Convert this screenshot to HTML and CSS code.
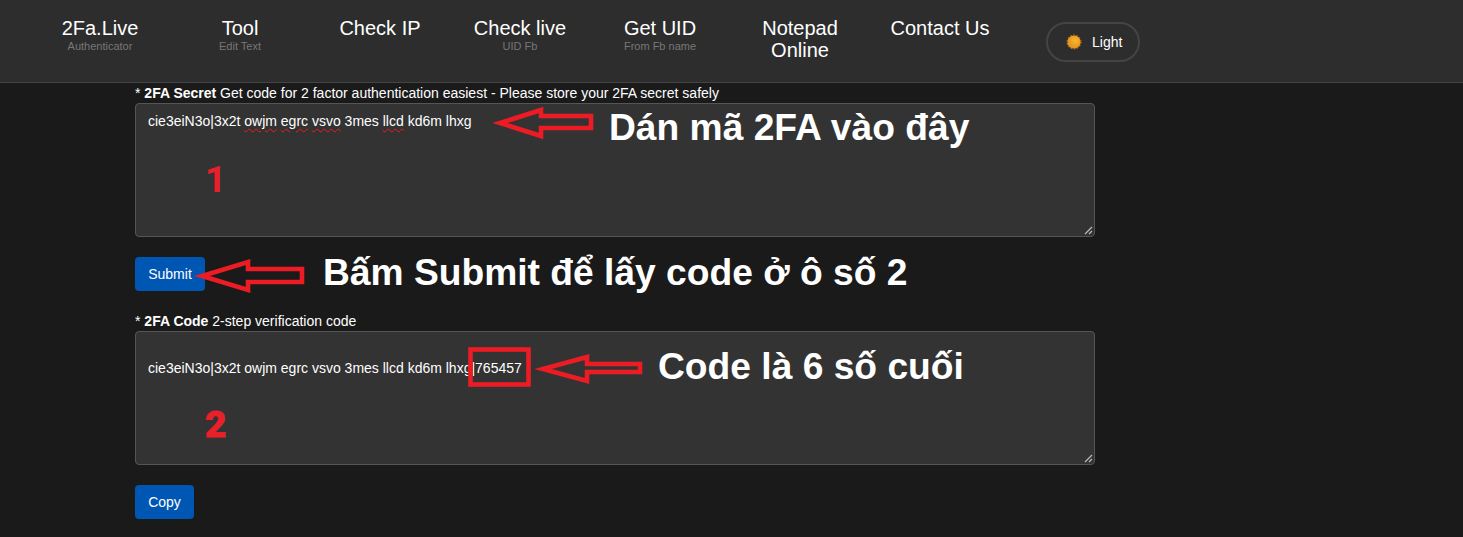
FILE: index.html
```html
<!DOCTYPE html>
<html lang="vi">
<head>
<meta charset="utf-8">
<title>2Fa.Live</title>
<link rel="stylesheet" href="styles.css">
</head>
<body>
<header class="topbar">
  <nav class="nav">
    <a class="nav-item"><span class="nav-title">2Fa.Live</span><span class="nav-sub">Authenticator</span></a>
    <a class="nav-item"><span class="nav-title">Tool</span><span class="nav-sub">Edit Text</span></a>
    <a class="nav-item"><span class="nav-title">Check IP</span></a>
    <a class="nav-item"><span class="nav-title">Check live</span><span class="nav-sub">UID Fb</span></a>
    <a class="nav-item"><span class="nav-title">Get UID</span><span class="nav-sub">From Fb name</span></a>
    <a class="nav-item"><span class="nav-title">Notepad Online</span></a>
    <a class="nav-item"><span class="nav-title">Contact Us</span></a>
  </nav>
  <div class="theme-toggle">
    <svg class="sun" width="16" height="16" viewBox="0 0 16 16">
      <defs><radialGradient id="sunfill" cx="0.6" cy="0.4" r="0.7"><stop offset="0" stop-color="#fbb62f"/><stop offset="1" stop-color="#e08a1a"/></radialGradient></defs>
      <circle cx="8" cy="8" r="6.6" fill="url(#sunfill)"/>
      <circle cx="8" cy="8" r="7" fill="none" stroke="#e08a1a" stroke-width="0.9" stroke-dasharray="1.6 1.6"/>
    </svg>
    <span>Light</span>
  </div>
</header>
<main class="content">
  <p class="field-label">* <b>2FA Secret</b> Get code for 2 factor authentication easiest - Please store your 2FA secret safely</p>
  <div class="textbox">cie3eiN3o|3x2t <span class="typo">owjm</span> <span class="typo">egrc</span> <span class="typo">vsvo</span> 3mes <span class="typo">llcd</span> kd6m lhxg<svg class="grip" width="9" height="9" viewBox="0 0 9 9"><path d="M1 8 8 1M5 8 8 5" stroke="#bbb" stroke-width="1.2"/></svg></div>
  <button class="btn btn-submit">Submit</button>
  <p class="field-label">* <b>2FA Code</b> 2-step verification code</p>
  <div class="textbox textbox-result">cie3eiN3o|3x2t owjm egrc vsvo 3mes llcd kd6m lhxg|765457<svg class="grip" width="9" height="9" viewBox="0 0 9 9"><path d="M1 8 8 1M5 8 8 5" stroke="#bbb" stroke-width="1.2"/></svg></div>
  <button class="btn btn-copy">Copy</button>
</main>
<svg class="marks" width="1463" height="537" viewBox="0 0 1463 537">
  <g fill="none" stroke="#ed1c24" stroke-width="4.6" stroke-linejoin="miter">
    <path d="M500 123 541 110V116H591V128H541V136Z"/>
    <path d="M202 276 248 262V269H302V282H248V290Z"/>
    <path d="M543 369 587 357V364H640V372H587V381Z"/>
    <rect x="470.5" y="349.5" width="58" height="35"/>
  </g>
</svg>
<span class="note note-1">Dán mã 2FA vào đây</span>
<span class="note note-2">Bấm Submit để lấy code ở ô số 2</span>
<span class="note note-3">Code là 6 số cuối</span>
<span class="num num-1">1</span>
<span class="num num-2">2</span>
</body>
</html>
```
FILE: styles.css
```css
* { box-sizing: border-box; }
html, body { height: 100%; }
body {
  margin: 0;
  background: #1a1a1a;
  color: #fff;
  font-family: "Liberation Sans", Arial, sans-serif;
  overflow: hidden;
  position: relative;
}
.topbar {
  height: 83px;
  background: #2d2d2d;
  border-bottom: 1px solid #444;
  display: flex;
  padding: 17px 0 0 30px;
}
.nav { display: flex; }
.nav-item {
  width: 140px;
  padding: 0 20px;
  display: flex;
  flex-direction: column;
  align-items: center;
  text-align: center;
}
.nav-title { font-size: 20px; line-height: 22px; color: #fff; }
.nav-sub { font-size: 11px; line-height: 13px; margin-top: 1px; color: #777; }
.theme-toggle {
  width: 94px;
  height: 40px;
  margin: 5px 0 0 36px;
  border: 2px solid #444;
  border-radius: 20px;
  display: flex;
  align-items: center;
  gap: 10px;
  padding-left: 18px;
  font-size: 14px;
}
.sun { flex: none; }
.content {
  width: 960px;
  margin-left: 135px;
}
.field-label {
  margin: 0;
  font-size: 14px;
  line-height: 20px;
}
.textbox {
  position: relative;
  height: 134px;
  background: #333;
  border: 1px solid #555;
  border-radius: 4px;
  padding: 7px 12px;
  font-size: 14px;
  line-height: 20px;
}
.textbox-result { padding-top: 26px; }
.typo {
  text-decoration: underline wavy #f01c1c 1.1px;
  text-underline-offset: 2px;
}
.grip { position: absolute; right: 1px; bottom: 1px; }
.btn {
  display: block;
  height: 34px;
  border: 0;
  border-radius: 4px;
  background: #0056b3;
  color: #fff;
  font: 14px "Liberation Sans", Arial, sans-serif;
  padding: 0;
}
.btn-submit { width: 70px; margin: 20px 0 20px; }
.btn-copy { width: 59px; margin-top: 20px; }
.marks { position: absolute; left: 0; top: 0; pointer-events: none; }
.note {
  position: absolute;
  font-size: 37.2px;
  line-height: 40px;
  font-weight: 700;
  white-space: nowrap;
}
.note-1 { left: 609px; top: 107px; }
.note-2 { left: 323px; top: 252px; }
.note-3 { left: 658px; top: 346px; }
.num {
  position: absolute;
  color: #e8202a;
  font-family: Roboto, "Liberation Sans", sans-serif;
  font-size: 37px;
  line-height: 40px;
}
.num-1 { left: 205px; top: 160px; font-weight: 700; }
.num-2 { left: 205px; top: 405px; font-weight: 900; -webkit-text-stroke: 0.8px #e8202a; }
```
